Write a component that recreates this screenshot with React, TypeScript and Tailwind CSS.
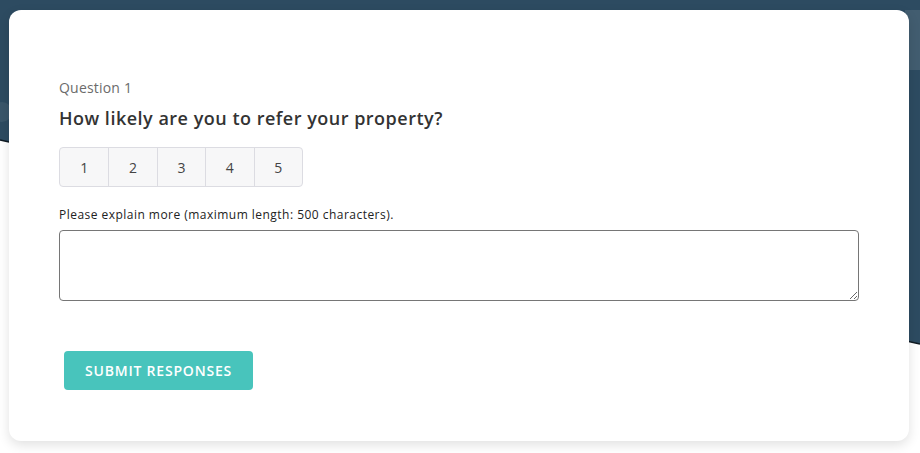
import { useState } from "react";

const ratings = [1, 2, 3, 4, 5];

export default function App() {
  const [picked, setPicked] = useState<number | null>(null);
  const [note, setNote] = useState("");

  return (
    <div className="relative h-[453px] w-[920px] overflow-hidden bg-white font-['Open_Sans',sans-serif]">
      {/* hero background behind the card */}
      <svg className="absolute inset-0" width="920" height="453" viewBox="0 0 920 453">
        <polygon points="0,0 920,0 920,344 0,140" fill="#2d4b61" />
        <rect x="905" y="10" width="15" height="60" fill="#425d70" />
        <circle cx="2" cy="112" r="10" fill="#3a566a" />
        <line x1="0" y1="140" x2="920" y2="344" stroke="#0f1a22" strokeWidth="1.5" />
      </svg>

      <div className="relative pl-[9px] pt-[10px]">
        <div className="h-[431px] w-[900px] rounded-xl bg-white px-[50px] pt-[68px] shadow-[0_4px_12px_rgba(0,0,0,0.12)]">
          <p className="text-[14px] leading-5 text-[#6b6b6b] tracking-[0.2px]">Question 1</p>
          <h2 className="mt-[8px] text-[18px] font-semibold leading-6 text-[#333] tracking-[0.5px]">
            How likely are you to refer your property?
          </h2>

          <div className="mt-[17px] flex w-fit overflow-hidden rounded border border-[#dcdce2] bg-[#f7f7f8]">
            {ratings.map((r, i) => (
              <button
                key={r}
                onClick={() => setPicked(r)}
                className={`flex h-[38px] w-[48.4px] items-center justify-center text-[14px] font-medium text-[#444] ${
                  i > 0 ? "border-l border-[#dcdce2]" : ""
                } ${picked === r ? "bg-[#e9e9ec]" : ""}`}
              >
                {r}
              </button>
            ))}
          </div>

          <p className="mt-[20px] text-[12px] leading-4 text-[#222] tracking-[0.47px]">
            Please explain more (maximum length: 500 characters).
          </p>
          <textarea
            value={note}
            maxLength={500}
            onChange={(e) => setNote(e.target.value)}
            className="mt-[7px] block h-[71px] w-full rounded-sm border border-[#767676] bg-white p-2 text-[13px]"
          />

          <button className="ml-[5px] mt-[50px] h-[39px] w-[189px] rounded bg-[#48c4bc] text-[14px] font-semibold uppercase tracking-[0.8px] text-white">
            Submit Responses
          </button>
        </div>
      </div>
    </div>
  );
}
